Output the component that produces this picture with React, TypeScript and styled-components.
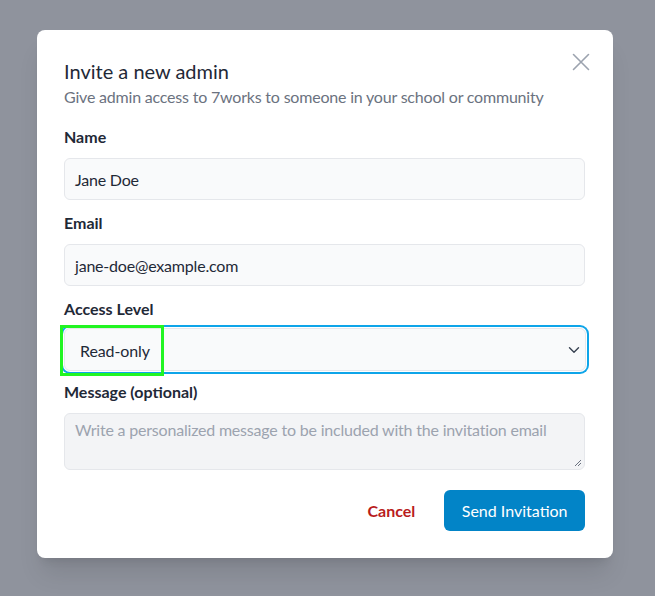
import React from "react";
import styled, { createGlobalStyle } from "styled-components";

const GlobalStyle = createGlobalStyle`
  html, body {
    margin: 0;
    padding: 0;
    background: #8f939d;
    font-family: Lato, "Noto Sans", sans-serif;
  }
  * { box-sizing: border-box; }
`;

const Overlay = styled.div`
  width: 655px;
  height: 596px;
  padding: 30px 0 0 37px;
  background: #8f939d;
`;

const Modal = styled.div`
  position: relative;
  width: 576px;
  background: #fff;
  border-radius: 8px;
  padding: 28px 28px 27px 27px;
  box-shadow: 0 20px 25px -5px rgba(0, 0, 0, 0.1), 0 8px 10px -6px rgba(0, 0, 0, 0.1);
  color: #1f2937;
`;

const CloseButton = styled.button`
  position: absolute;
  top: 20px;
  right: 20px;
  width: 24px;
  height: 24px;
  padding: 0;
  border: 0;
  background: none;
  color: #9ca3af;
  display: flex;
`;

const Title = styled.h2`
  margin: 0;
  font-size: 20px;
  line-height: 27px;
  font-weight: 400;
  color: #1f2937;
`;

const Subtitle = styled.p`
  margin: 0 0 16px;
  font-size: 16px;
  line-height: 24px;
  letter-spacing: -0.2px;
  color: #6b7280;
`;

const Field = styled.div<{ $gap?: number }>`
  display: flex;
  flex-direction: column;
  margin-bottom: ${(p) => p.$gap ?? 11}px;
`;

const Label = styled.label<{ $space?: number }>`
  font-size: 16px;
  line-height: 24px;
  font-weight: 700;
  color: #1f2937;
  margin-bottom: ${(p) => p.$space ?? 9}px;
`;

const Input = styled.div`
  height: 42px;
  display: flex;
  align-items: center;
  padding: 0 10px;
  background: #f9fafb;
  border: 1px solid #e5e7eb;
  border-radius: 6px;
  font-size: 16px;
  letter-spacing: -0.2px;
  color: #1f2937;
`;

const Select = styled.div`
  position: relative;
  height: 43px;
  width: 522px;
  display: flex;
  align-items: center;
  padding: 0 5px 0 0;
  background: #f9fafb;
  border: 1px solid #e5e7eb;
  border-radius: 6px;
  box-shadow: 0 0 0 1px #fff, 0 0 0 3px #0ea5e9;
  font-size: 16px;
  letter-spacing: -0.1px;
  color: #1f2937;
`;

const SelectValue = styled.span`
  position: absolute;
  left: -5px;
  top: -4px;
  width: 104px;
  height: 51px;
  display: flex;
  align-items: center;
  padding-left: 17px;
  border: 3px solid #22f522;
`;

const Chevron = styled.svg`
  margin-left: auto;
  color: #374151;
`;

const TextArea = styled.div`
  position: relative;
  height: 57px;
  padding: 5px 10px;
  background: #f3f4f6;
  border: 1px solid #e5e7eb;
  border-radius: 6px;
  font-size: 16px;
  line-height: 22px;
  letter-spacing: -0.2px;
  color: #9ca3af;
`;

const Grip = styled.svg`
  position: absolute;
  right: 2px;
  bottom: 2px;
`;

const Actions = styled.div`
  display: flex;
  justify-content: flex-end;
  align-items: center;
  gap: 13px;
  margin-top: 20px;
`;

const Button = styled.button<{ $primary?: boolean }>`
  height: 41px;
  padding: 0 ${(p) => (p.$primary ? 17.5 : 16)}px;
  border: 0;
  border-radius: 6px;
  white-space: nowrap;
  font-family: Lato, "Noto Sans", sans-serif;
  font-size: 16px;
  font-weight: ${(p) => (p.$primary ? 400 : 700)};
  background: ${(p) => (p.$primary ? "#0284c7" : "transparent")};
  color: ${(p) => (p.$primary ? "#fff" : "#b91c1c")};
`;

export default function App() {
  return (
    <Overlay>
      <GlobalStyle />
      <Modal>
        <CloseButton aria-label="Close">
          <svg width="24" height="24" viewBox="0 0 24 24" fill="none" stroke="currentColor" strokeWidth="1.6" strokeLinecap="round">
            <path d="M4.5 4.5l15 15M19.5 4.5l-15 15" />
          </svg>
        </CloseButton>
        <Title>Invite a new admin</Title>
        <Subtitle>Give admin access to 7works to someone in your school or community</Subtitle>

        <Field>
          <Label>Name</Label>
          <Input>Jane Doe</Input>
        </Field>
        <Field>
          <Label>Email</Label>
          <Input>jane-doe@example.com</Input>
        </Field>
        <Field $gap={9}>
          <Label $space={7}>Access Level</Label>
          <Select>
            <SelectValue>Read-only</SelectValue>
            <Chevron width="12" height="8" viewBox="0 0 12 8" fill="none" stroke="currentColor" strokeWidth="1.4" strokeLinecap="round" strokeLinejoin="round">
              <path d="M1.5 1.8 6 6.2l4.5-4.4" />
            </Chevron>
          </Select>
        </Field>
        <Field $gap={0}>
          <Label>Message (optional)</Label>
          <TextArea>
            Write a personalized message to be included with the invitation email
            <Grip width="8" height="8" viewBox="0 0 8 8" stroke="#6b7280" strokeWidth="1">
              <path d="M1 7 7 1M4 7l3-3" />
            </Grip>
          </TextArea>
        </Field>

        <Actions>
          <Button>Cancel</Button>
          <Button $primary>Send Invitation</Button>
        </Actions>
      </Modal>
    </Overlay>
  );
}
